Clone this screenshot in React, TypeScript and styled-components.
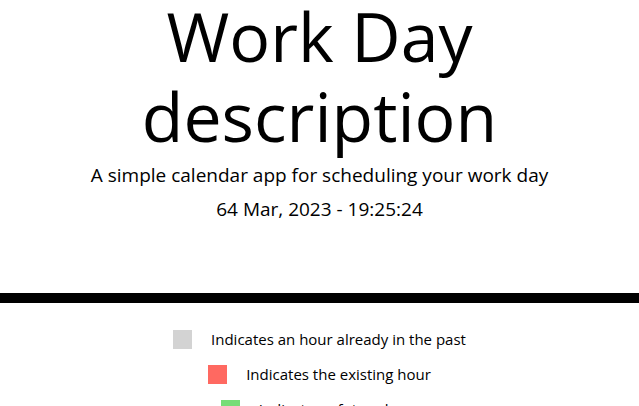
import React from 'react';
import styled, { createGlobalStyle } from 'styled-components';

const GlobalStyle = createGlobalStyle`
  html, body {
    margin: 0;
    padding: 0;
    background: #fff;
    color: #000;
    font-family: 'Open Sans', 'Liberation Sans', sans-serif;
  }
`;

type Legend = {
  color: string;
  label: string;
};

const legend: Legend[] = [
  { color: '#d3d3d3', label: 'Indicates an hour already in the past' },
  { color: '#ff6961', label: 'Indicates the existing hour' },
  { color: '#77dd77', label: 'Indicates a future hour' },
];

const Page = styled.div`
  display: flex;
  flex-direction: column;
`;

const Header = styled.header`
  display: flex;
  flex-direction: column;
  align-items: center;
  text-align: center;
  margin-top: -4px;
  padding-bottom: 70px;
`;

const Title = styled.h1`
  margin: 0;
  font-size: 68px;
  font-weight: 400;
  line-height: 80px;
  width: 400px;
`;

const Lead = styled.p`
  margin: 5px 0 0;
  font-size: 19px;
  line-height: 28px;
`;

const CurrentDay = styled.p`
  margin: 6px 0 0;
  font-size: 19px;
  line-height: 28px;
`;

const Legend = styled.section`
  border-top: 10px solid #000;
  display: flex;
  flex-direction: column;
  align-items: center;
  gap: 15px;
  padding-top: 26px;
`;

const LegendRow = styled.div`
  display: flex;
  align-items: center;
  gap: 19px;
  font-size: 15px;
  line-height: 20px;
`;

const Swatch = styled.span<{ $color: string }>`
  width: 19px;
  height: 19px;
  background: ${(p) => p.$color};
`;

export default function App() {
  return (
    <Page>
      <GlobalStyle />
      <Header>
        <Title>Work Day description</Title>
        <Lead>A simple calendar app for scheduling your work day</Lead>
        <CurrentDay>64 Mar, 2023 - 19:25:24</CurrentDay>
      </Header>
      <Legend>
        {legend.map((item) => (
          <LegendRow key={item.label}>
            <Swatch $color={item.color} />
            <span>{item.label}</span>
          </LegendRow>
        ))}
      </Legend>
    </Page>
  );
}
